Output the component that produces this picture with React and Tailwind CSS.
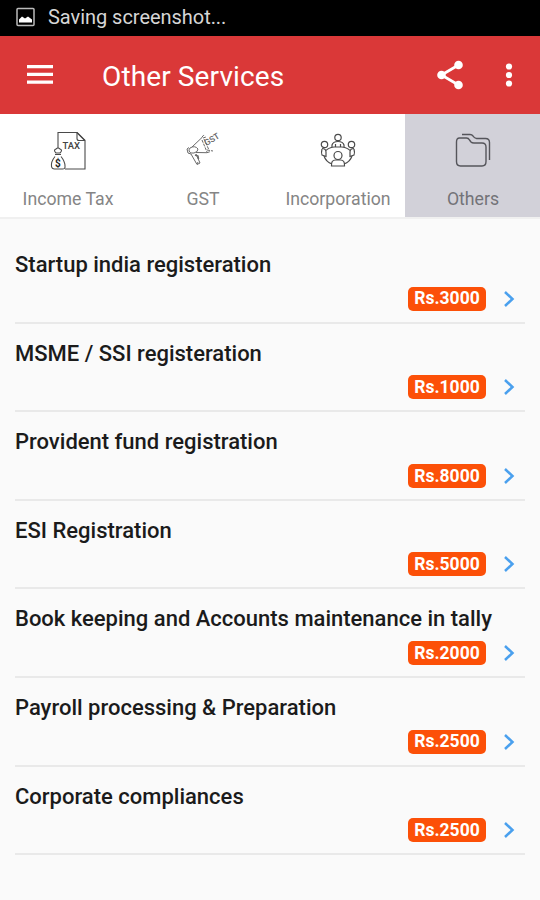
import React from "react";

const services = [
  { name: "Startup india registeration", price: 3000 },
  { name: "MSME / SSI registeration", price: 1000 },
  { name: "Provident fund registration", price: 8000 },
  { name: "ESI Registration", price: 5000 },
  { name: "Book keeping and Accounts maintenance in tally", price: 2000 },
  { name: "Payroll processing & Preparation", price: 2500 },
  { name: "Corporate compliances", price: 2500 },
];

const TaxIcon = () => (
  <svg width="40" height="44" viewBox="0 0 40 44" fill="none" stroke="#4a4a4a" strokeWidth="1.100">
    <path d="M10 18V2.500h19l8 8v28.500H17" />
    <path d="M29 2.500v6q0 2 2 2h6" />
    <path d="M29 2.500l8 8" />
    <path d="M8 23q-3-3 0-4 2-2 4 0 3 1 0 4z" />
    <path d="M7 24.500h6M7 26.500C5 29 3 33 3.500 36.500q.5 2.500 3 2.500h8q3 0 2.500-3c0-4-2-7-4-9.500" />
    <text x="14.500" y="18.500" fontSize="9.500" fontWeight="500" fill="#444" stroke="none" textLength="17.500">
      TAX
    </text>
    <text x="7" y="37" fontSize="10" fontWeight="700" fill="#222" stroke="none">
      $
    </text>
  </svg>
);

const GstIcon = () => (
  <svg width="40" height="44" viewBox="0 0 40 44" fill="none" stroke="#6a6a6a" strokeWidth="1">
    <path d="M9 17L19 7.500M13 22.500l11 .2" />
    <path d="M7 18q5-3 8 1 0 3-4 4-4 1-5-2 0-2 1-3z" />
    <path d="M6 17.500l-2 1.500 1 4 3 1M8 24l6 10.500 3-1.500-4-9" />
    <path d="M12 25l3 1 .5 3" strokeWidth="1.500" />
    <path d="M15 32l-1 2" />
    <path d="M19 7.500q1-3 3-2M20 8l3-1M19 10l5 12M21 9l5 11M24 22.700l3-1M24 20l6 1" strokeDasharray="3 1" />
    <text fontSize="8.500" fontWeight="500" fill="#666" stroke="none" transform="translate(23.500 16) rotate(-32)">
      GST
    </text>
  </svg>
);

const MeetingIcon = () => (
  <svg width="40" height="44" viewBox="0 0 40 44" fill="none" stroke="#4a4a4a" strokeWidth="1.200">
    <circle cx="20" cy="7.500" r="3.200" />
    <path d="M14 17v-2q1-3.500 6-3.500t6 3.500v2M17.500 17v-3M22.500 17v-3" />
    <circle cx="6.500" cy="14.500" r="3.200" />
    <circle cx="33.500" cy="14.500" r="3.200" />
    <path d="M4 19q-1 4 0 6l4 1.500V22q0-3.500-4-3.500M36 19q1 4 0 6l-4 1.500V22q0-3.500 4-3.500" />
    <path d="M8 20.500q2-2.500 8-3.500h8q6 1 8 3.500M6 26q2 6 8 8M34 26q-2 6-8 8" />
    <circle cx="20" cy="25.500" r="4" />
    <path d="M13.500 36q-.5-6 4-6h5q4.500 0 4 6z" />
  </svg>
);

const FolderIcon = () => (
  <svg width="40" height="44" viewBox="0 0 40 44" fill="none" stroke="#55555b" strokeWidth="1.400" strokeLinejoin="round">
    <path d="M6.500 8h7q2 0 3 2l1.500 2q1 1 3 1h8q4 0 4 4v14.500q0 4.500-4 4.500H7.500q-4 0-4-4.500V12q0-4 3-4z" />
    <path d="M9 4.500h8q2 0 3 1.500 1.500 2.500 3.500 2.500H32.500q4 0 4 4V30" />
  </svg>
);

const tabs = [
  { label: "Income Tax", icon: TaxIcon },
  { label: "GST", icon: GstIcon },
  { label: "Incorporation", icon: MeetingIcon },
  { label: "Others", icon: FolderIcon, active: true },
];

const StatusBar = () => (
  <div className="flex h-9 items-center bg-black pl-4 text-[#d6d6d6]">
    <svg width="20" height="20" viewBox="0 0 20 20" className="mt-[-2px]">
      <rect x="1" y="1.500" width="17" height="17" rx="1" fill="none" stroke="#bbb" strokeWidth="1.500" />
      <path d="M3 15.500v-3l3-3 3 2 3-2 4 3v3z" fill="#fff" />
    </svg>
    <span className="ml-3 mt-[-2px] text-[20px] tracking-[-0.040px]">Saving screenshot...</span>
  </div>
);

const AppBar = () => (
  <header className="flex h-[78px] items-center bg-[#da3838] pl-[26px] text-white">
    <svg width="28" height="22" viewBox="0 0 28 22" fill="#fff">
      <path d="M1 1h26v3.300H1zM1 8.800h26v3.300H1zM1 16.500h26v3.300H1z" />
    </svg>
    <h1 className="ml-[48px] mt-[3px] text-[28px] font-normal tracking-[0.120px]">Other Services</h1>
    <svg width="30" height="32" viewBox="0 0 30 32" fill="#fff" className="ml-auto">
      <path d="M22.500 6L5.500 16l17 10" fill="none" stroke="#fff" strokeWidth="2.800" />
      <circle cx="22.500" cy="6" r="4.300" />
      <circle cx="5.500" cy="16" r="4.300" />
      <circle cx="22.500" cy="26" r="4.300" />
    </svg>
    <svg width="10" height="26" viewBox="0 0 10 26" fill="#fff" className="ml-[38px] mr-[26px]">
      <circle cx="5" cy="4.500" r="3.100" />
      <circle cx="5" cy="13" r="3.100" />
      <circle cx="5" cy="21.500" r="3.100" />
    </svg>
  </header>
);

const ServiceRow = ({ name, price }) => (
  <li className="flex h-[88.600px] flex-col border-b-2 border-[#e9e9e9] pt-[17px]">
    <h2 className="whitespace-nowrap text-[22px] font-medium leading-[26px] text-[#1b1b1b]">{name}</h2>
    <div className="mt-[8.600px] flex items-center justify-end pr-[9px]">
      <span className="flex h-6 w-[78px] items-center justify-center rounded-[5px] bg-[#fc5008] text-[17.500px] font-bold text-white">
        Rs.{price}
      </span>
      <svg width="14" height="18" viewBox="0 0 14 18" fill="none" stroke="#4aa0ee" strokeWidth="2.500" className="ml-[16px]">
        <path d="M3 2l7.500 7L3 16" />
      </svg>
    </div>
  </li>
);

export default function App() {
  return (
    <div className="h-[900px] w-[540px] overflow-hidden bg-[#fafafa] font-['Roboto',sans-serif]">
      <StatusBar />
      <AppBar />
      <nav className="grid h-[105px] grid-cols-4 border-b-2 border-[#f0f0f0] bg-white">
        {tabs.map(({ label, icon: Icon, active }) => (
          <button
            key={label}
            type="button"
            className={`flex flex-col items-center pt-[16px] text-[17.700px] ${
              active ? "bg-[#d2d1d9] text-[#737378]" : "text-[#858585]"
            }`}
          >
            <Icon />
            <span className="ml-px mt-[11px] leading-[28px]">{label}</span>
          </button>
        ))}
      </nav>
      <ul className="px-[15px] pt-[16px]">
        {services.map((s) => (
          <ServiceRow key={s.name} name={s.name} price={s.price} />
        ))}
      </ul>
    </div>
  );
}
